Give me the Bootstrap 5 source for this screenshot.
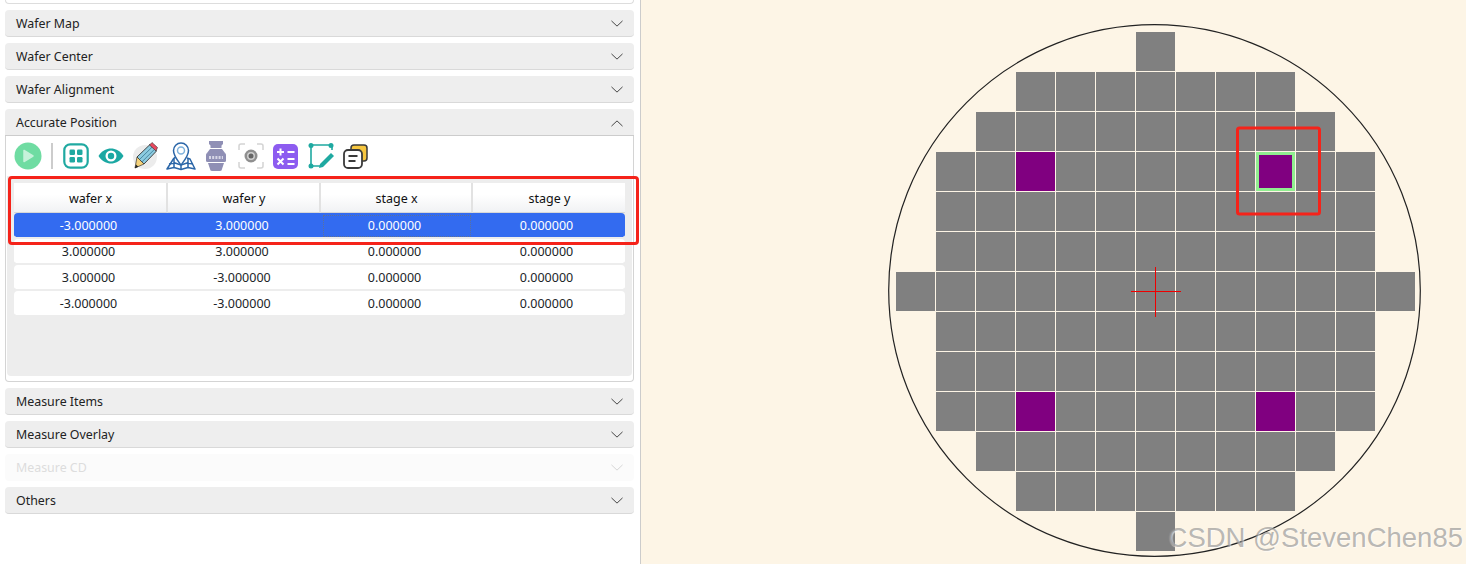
<!DOCTYPE html>
<html lang="en">
<head>
  <meta charset="UTF-8">
  <meta name="viewport" content="width=device-width, initial-scale=1.0">
  <title>Wafer Measure</title>
  <link href="https://cdn.jsdelivr.net/npm/bootstrap@5.3.0/dist/css/bootstrap.min.css" rel="stylesheet">
  <style>
    html, body {
      height: 564px;
      overflow: hidden;
    }
    body {
      font-family: "Noto Sans", "Liberation Sans", sans-serif;
      font-size: 12.5px;
      color: #222;
      background: #fff;
    }
    .side-panel {
      width: 641px;
      height: 564px;
      flex: none;
      padding: 0 6px 0 5px;
      border-right: 1px solid #ccc;
      position: relative;
    }
    .cut-item {
      height: 4px;
      margin-bottom: 6px;
      border: 1px solid #ddd;
      border-top: 0;
      border-radius: 0 0 4px 4px;
    }
    .accordion {
      --bs-accordion-border-radius: 4px;
      --bs-accordion-inner-border-radius: 3px;
      --bs-accordion-btn-padding-x: 11px;
      --bs-accordion-btn-padding-y: 0;
      --bs-accordion-btn-bg: #eeeeee;
      --bs-accordion-active-bg: #eeeeee;
      --bs-accordion-active-color: #222;
      --bs-accordion-btn-color: #222;
      --bs-accordion-btn-icon-width: 12px;
      --bs-accordion-btn-focus-box-shadow: none;
      --bs-accordion-btn-focus-border-color: transparent;
      --bs-accordion-btn-icon: url("data:image/svg+xml,%3csvg xmlns='http://www.w3.org/2000/svg' viewBox='0 0 13 8'%3e%3cpath fill='none' stroke='%23333' stroke-width='1' d='M.5 1l6 6 6-6'/%3e%3c/svg%3e");
      --bs-accordion-btn-active-icon: url("data:image/svg+xml,%3csvg xmlns='http://www.w3.org/2000/svg' viewBox='0 0 13 8'%3e%3cpath fill='none' stroke='%23333' stroke-width='1' d='M.5 1l6 6 6-6'/%3e%3c/svg%3e");
    }
    .accordion-item {
      margin-bottom: 6px;
      border: 0;
      background: transparent;
    }
    .accordion-button {
      height: 27px;
      padding-top: 2px;
      font-size: 12.4px;
      border-radius: 4px !important;
      border-bottom: 1px solid #d9d9d9;
      box-shadow: none !important;
    }
    .accordion-button:not(.collapsed) {
      border-radius: 4px 4px 0 0 !important;
      border-bottom: 1px solid #ccc;
    }
    .accordion-button::after {
      height: 8px;
    }
    .item-off .accordion-button {
      background: #fbfbfb;
      color: #ddd;
      border-bottom-color: #fbfbfb;
    }
    .item-off .accordion-button::after {
      opacity: .2;
    }
    .accordion-body {
      padding: 0 1px 5px;
      height: 246px;
      border: 1px solid #d4d4d4;
      border-top: 0;
      border-radius: 0 0 4px 4px;
    }
    .tool-strip {
      height: 40px;
      padding-left: 7px;
    }
    .tool-strip svg {
      display: block;
      flex: none;
    }
    .tool-sep {
      width: 2px;
      height: 26px;
      background: #ccc;
      margin: 0 10px 0 9px;
    }
    .point-box {
      height: 200px;
      padding: 7px 6px 0 7px;
      background: #ededed;
      border-radius: 0 0 4px 4px;
    }
    .point-table {
      width: 611px;
      table-layout: fixed;
      border-collapse: separate;
      border-spacing: 0;
      text-align: center;
    }
    .col-a { width: 154px; }
    .col-b { width: 153px; }
    .col-c { width: 152px; }
    .point-table th {
      height: 30px;
      font-weight: 400;
      color: #111;
      background: linear-gradient(#fff 40%, #f1f2f4);
      border-right: 2px solid #e2e2e2;
      border-bottom: 1px solid #d8d8d8;
      padding: 3px 0 0 1px;
    }
    .point-table th:last-child {
      border-right: 0;
    }
    .point-table td {
      height: 26px;
      padding: 2px 5px 0 0;
      background: #fff;
      background-clip: padding-box;
      border-bottom: 2px solid #ededed;
    }
    .point-table td:first-child {
      border-radius: 4px 0 0 4px;
    }
    .point-table td:last-child {
      border-radius: 0 4px 4px 0;
    }
    .point-table tr.row-picked td {
      background-color: #336bf0;
      background-clip: padding-box;
      color: #fff;
    }
    .cell-focus {
      outline: 1px dotted #5d7198;
      outline-offset: -3px;
    }
    .note-frame {
      position: absolute;
      left: 8px;
      top: 176px;
      width: 631px;
      height: 69px;
      border: 3px solid #f5231a;
      border-radius: 4px;
      pointer-events: none;
    }
    .map-pane {
      background: #fdf5e6;
      height: 564px;
      position: relative;
    }
    .map-pane svg {
      display: block;
    }
    .stamp {
      position: absolute;
      right: 3px;
      top: 520px;
      font-family: "Liberation Sans", Arial, sans-serif;
      font-size: 27.5px;
      line-height: 36px;
      color: rgba(140, 140, 140, .62);
      text-shadow: 1px 1px 1px rgba(255, 255, 255, .6);
      white-space: nowrap;
    }
  </style>
</head>
<body>
  <div class="d-flex">
    <div class="side-panel">
      <div class="cut-item"></div>
      <div class="accordion" id="sideAccordion">
        <div class="accordion-item">
          <h2 class="accordion-header"><button class="accordion-button collapsed" type="button">Wafer Map</button></h2>
        </div>
        <div class="accordion-item">
          <h2 class="accordion-header"><button class="accordion-button collapsed" type="button">Wafer Center</button></h2>
        </div>
        <div class="accordion-item">
          <h2 class="accordion-header"><button class="accordion-button collapsed" type="button">Wafer Alignment</button></h2>
        </div>
        <div class="accordion-item">
          <h2 class="accordion-header"><button class="accordion-button" type="button">Accurate Position</button></h2>
          <div class="accordion-collapse collapse show">
            <div class="accordion-body">
              <div class="tool-strip d-flex align-items-center">
                <!-- play -->
                <svg width="28" height="28" viewBox="0 0 28 28"><circle cx="14" cy="14" r="13.5" fill="#6fdca2"/><path d="M10 8.5v11l9-5.500z" fill="#c6f2da" stroke="#c6f2da" stroke-width="1.500" stroke-linejoin="round"/></svg>
                <div class="tool-sep"></div>
                <!-- grid -->
                <svg width="26" height="26" viewBox="0 0 26 26"><rect x="1.300" y="1.300" width="23.400" height="23.400" rx="6" fill="none" stroke="#1fa9a1" stroke-width="2.200"/><g fill="#1fa9a1"><rect x="6.500" y="6.500" width="5.500" height="5.500" rx="1.200"/><rect x="14" y="6.500" width="5.500" height="5.500" rx="1.200"/><rect x="6.500" y="14" width="5.500" height="5.500" rx="1.200"/><rect x="14" y="14" width="5.500" height="5.500" rx="1.200"/></g></svg>
                <!-- eye -->
                <svg width="26" height="26" viewBox="0 0 26 26" style="margin-left:9px"><path d="M.5 13C4 7.500 8.500 5.500 13 5.500S22 7.500 25.500 13C22 18.500 17.500 20.500 13 20.500S4 18.500.5 13z" fill="#1ba8a3"/><circle cx="13" cy="13" r="5.500" fill="#fff"/><circle cx="13" cy="13" r="3.200" fill="#1ba8a3"/></svg>
                <!-- pencil -->
                <svg width="26" height="28" viewBox="0 0 26 28" style="margin-left:8px"><circle cx="13" cy="15" r="12" fill="#ececec"/><path d="M5 15L18 2.500l6.500 6.500L12 22z" fill="#8ccbe0" stroke="#333" stroke-width=".9"/><path d="M7.500 17.500L20 5.200M9.800 20L22.300 7.500" stroke="#3f7f9a" stroke-width=".9"/><path d="M17.500 3l2.500-2.500 5.500 5-1.500 3.500z" fill="#e84a5f" stroke="#333" stroke-width=".6"/><path d="M5 15l7 7-9 4z" fill="#f4d27a" stroke="#333" stroke-width=".7"/><path d="M4 22.500L2.800 26.300l3.600-1.600z" fill="#222"/></svg>
                <!-- map -->
                <svg width="30" height="30" viewBox="0 0 30 30" style="margin-left:8px"><g fill="none" stroke="#2b66a8" stroke-width="1.500" stroke-linejoin="round"><path d="M8 17L1 28l7-1.500 7 2 7-2 7 1.500-5-10-3-1"/><path d="M8 17l3-1M8 17v9.500M15 28.500V21M22 17v9.500M3 23l6-1 6 2 6-2 6 1"/><path d="M15 24c-3-4-7.500-9-7.500-14.500a7.500 7.500 0 0 1 15 0C22.500 15 18 20 15 24z" fill="#fff"/><circle cx="15" cy="9.500" r="3.500" stroke="#7fb2dc"/></g></svg>
                <!-- lens -->
                <svg width="20" height="30" viewBox="0 0 20 30" style="margin-left:10px"><g fill="#8f8fb5"><path d="M3 0h14v3l-1.500 1.500V7h-11V4.500L3 3z"/><path d="M4 8h12l3 4H1z"/><rect x="0" y="12" width="20" height="9" rx="1.500"/><path d="M2 22h16l-2 6a2 2 0 0 1-2 2H6a2 2 0 0 1-2-2z"/></g><path d="M3 16.500h14" stroke="#d6d6e6" stroke-width="3" stroke-dasharray="2 1.200"/></svg>
                <!-- camera -->
                <svg width="26" height="26" viewBox="0 0 26 26" style="margin-left:12px"><path d="M1 7V3a2 2 0 0 1 2-2h4M19 1h4a2 2 0 0 1 2 2v4M25 19v4a2 2 0 0 1-2 2h-4M7 25H3a2 2 0 0 1-2-2v-4" fill="none" stroke="#d4d4d4" stroke-width="1.500"/><circle cx="13" cy="13" r="6.500" fill="#8f8f8f"/><circle cx="13" cy="13" r="4" fill="#d0d0d0"/><circle cx="13" cy="13" r="2.500" fill="#666"/></svg>
                <!-- calc -->
                <svg width="25" height="25" viewBox="0 0 25 25" style="margin-left:9px"><rect width="25" height="25" rx="5" fill="#8d5cf0"/><path d="M4 8h7M7.500 4.500v7M14.500 8h7M4.500 14.500l6 6M10.500 14.500l-6 6M14.500 15h7M14.500 20h7" stroke="#fff" stroke-width="2" fill="none"/></svg>
                <!-- edit square -->
                <svg width="26" height="26" viewBox="0 0 26 26" style="margin-left:10px"><path d="M3 2v21h9M3 2h21v5" fill="none" stroke="#1fa9a1" stroke-width="1.600"/><g fill="#1fa9a1"><circle cx="3" cy="2.500" r="2.500"/><circle cx="23" cy="2.500" r="2.500"/><circle cx="3" cy="23" r="2.500"/><path d="M12 21l11-11 3 3-11 11-4 1z"/></g></svg>
                <!-- copy -->
                <svg width="25" height="25" viewBox="0 0 25 25" style="margin-left:9px"><rect x="8" y="1" width="16" height="16" rx="3" fill="#f6c63f" stroke="#3a3a3a" stroke-width="1.500"/><rect x="1" y="6" width="18" height="18" rx="4" fill="#fff" stroke="#3a3a3a" stroke-width="1.800"/><path d="M5.500 12h9M5.500 17h7" stroke="#3a3a3a" stroke-width="1.800"/></svg>
              </div>
              <div class="point-box">
                <table class="point-table">
                  <colgroup><col class="col-a"><col class="col-b"><col class="col-c"><col class="col-c"></colgroup>
                  <thead>
                    <tr><th>wafer x</th><th>wafer y</th><th>stage x</th><th>stage y</th></tr>
                  </thead>
                  <tbody>
                    <tr class="row-picked"><td>-3.000000</td><td>3.000000</td><td class="cell-focus">0.000000</td><td>0.000000</td></tr>
                    <tr><td>3.000000</td><td>3.000000</td><td>0.000000</td><td>0.000000</td></tr>
                    <tr><td>3.000000</td><td>-3.000000</td><td>0.000000</td><td>0.000000</td></tr>
                    <tr><td>-3.000000</td><td>-3.000000</td><td>0.000000</td><td>0.000000</td></tr>
                  </tbody>
                </table>
              </div>
            </div>
          </div>
        </div>
        <div class="accordion-item">
          <h2 class="accordion-header"><button class="accordion-button collapsed" type="button">Measure Items</button></h2>
        </div>
        <div class="accordion-item">
          <h2 class="accordion-header"><button class="accordion-button collapsed" type="button">Measure Overlay</button></h2>
        </div>
        <div class="accordion-item item-off">
          <h2 class="accordion-header"><button class="accordion-button collapsed" type="button">Measure CD</button></h2>
        </div>
        <div class="accordion-item">
          <h2 class="accordion-header"><button class="accordion-button collapsed" type="button">Others</button></h2>
        </div>
      </div>
      <div class="note-frame"></div>
    </div>

    <div class="map-pane flex-grow-1">
      <svg id="waferMap" width="825" height="564" viewBox="641 0 825 564" xmlns="http://www.w3.org/2000/svg"></svg>
      <div class="stamp">CSDN @StevenChen85</div>
    </div>
  </div>

  <script src="https://cdn.jsdelivr.net/npm/bootstrap@5.3.0/dist/js/bootstrap.bundle.min.js"></script>
  <script>
    // first/last die column for each wafer row
    const rows = [[6,6],[3,9],[2,10],[1,11],[1,11],[1,11],[0,12],[1,11],[1,11],[1,11],[2,10],[3,9],[6,6]];
    const marked = ["3,3", "3,9", "9,3", "9,9"];
    const picked = "3,9";
    let out = '<circle cx="1154.500" cy="290.500" r="265.800" fill="none" stroke="#222" stroke-width="1.200"/>';
    rows.forEach((r, y) => {
      for (let x = r[0]; x <= r[1]; x++) {
        const px = 896 + x * 40, py = 32 + y * 40, key = y + "," + x;
        if (key === picked) {
          out += `<rect x="${px}" y="${py}" width="39" height="39" fill="#90ee90"/>`;
          out += `<rect x="${px + 3}" y="${py + 3}" width="33" height="33" fill="#800080"/>`;
        } else {
          out += `<rect x="${px}" y="${py}" width="39" height="39" fill="${marked.includes(key) ? "#800080" : "#808080"}"/>`;
        }
      }
    });
    out += '<path d="M1131 291.500h50M1155.500 267v50" stroke="#e00" stroke-width="1"/>';
    out += '<rect x="1237.500" y="128" width="82" height="86" rx="2" fill="none" stroke="#f5231a" stroke-width="3"/>';
    document.getElementById("waferMap").innerHTML = out;
  </script>
</body>
</html>
